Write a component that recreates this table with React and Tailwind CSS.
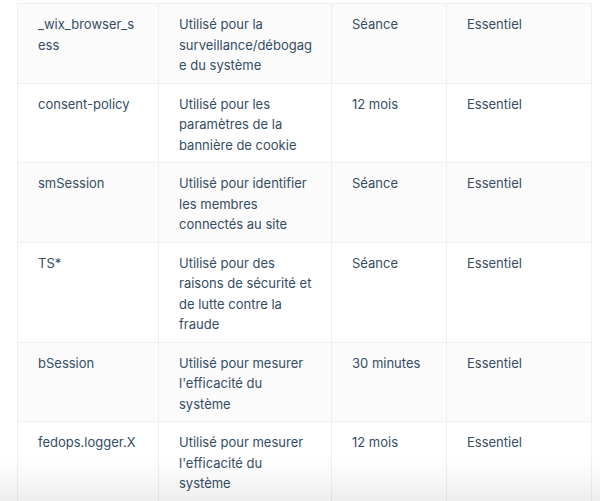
import React from "react";

const rows = [
  ["_wix_browser_sess", "Utilisé pour la surveillance/débogage du système", "Séance", "Essentiel"],
  ["consent-policy", "Utilisé pour les paramètres de la bannière de cookie", "12 mois", "Essentiel"],
  ["smSession", "Utilisé pour identifier les membres connectés au site", "Séance", "Essentiel"],
  ["TS*", "Utilisé pour des raisons de sécurité et de lutte contre la fraude", "Séance", "Essentiel"],
  ["bSession", "Utilisé pour mesurer l'efficacité du système", "30 minutes", "Essentiel"],
  ["fedops.logger.X", "Utilisé pour mesurer l'efficacité du système", "12 mois", "Essentiel"],
];

const pads = ["pr-[22px]", "pr-[18px]", "pr-[12px]", "pr-[12px]"];

export default function App() {
  return (
    <div className="relative w-[600px] h-[501px] overflow-hidden bg-white" style={{ fontFamily: "Inter, 'Noto Sans', sans-serif" }}>
      <div className="pt-[3px] pl-[17px] w-[591px]">
        <table className="w-[574px] border-collapse table-fixed text-[13px] leading-[20.5px] text-[#354d63]">
          <colgroup>
            <col className="w-[141px]" />
            <col className="w-[173px]" />
            <col className="w-[115px]" />
            <col className="w-[145px]" />
          </colgroup>
          <tbody>
            {rows.map((r, i) => (
              <tr key={i} className={i % 2 === 0 ? "bg-[#fbfbfb]" : "bg-white"}>
                {r.map((c, j) => (
                  <td key={j} className={`border border-[#eef0f1] align-top pt-[10px] pb-[7px] pl-[20px] ${pads[j]} [overflow-wrap:anywhere]`}>
                    {c}
                  </td>
                ))}
              </tr>
            ))}
          </tbody>
        </table>
      </div>
      <div className="pointer-events-none absolute left-0 right-0 bottom-0 h-[42px] bg-gradient-to-b from-transparent to-[rgba(0,0,0,0.07)]" />
    </div>
  );
}
